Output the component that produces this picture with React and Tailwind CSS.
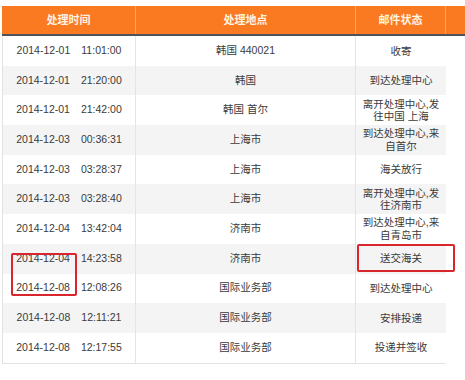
import React from "react";

const rows = [
  ["2014-12-01", "11:01:00", "韩国 440021", ["收寄"]],
  ["2014-12-01", "21:20:00", "韩国", ["到达处理中心"]],
  ["2014-12-01", "21:42:00", "韩国 首尔", ["离开处理中心,发", "往中国 上海"]],
  ["2014-12-03", "00:36:31", "上海市", ["到达处理中心,来", "自首尔"]],
  ["2014-12-03", "03:28:37", "上海市", ["海关放行"]],
  ["2014-12-03", "03:28:40", "上海市", ["离开处理中心,发", "往济南市"]],
  ["2014-12-04", "13:42:04", "济南市", ["到达处理中心,来", "自青岛市"]],
  ["2014-12-04", "14:23:58", "济南市", ["送交海关"]],
  ["2014-12-08", "12:08:26", "国际业务部", ["到达处理中心"]],
  ["2014-12-08", "12:11:21", "国际业务部", ["安排投递"]],
  ["2014-12-08", "12:17:55", "国际业务部", ["投递并签收"]],
];

const font = "font-['Liberation_Sans','Noto_Sans_CJK_SC',sans-serif]";

export default function App() {
  return (
    <div className={`relative w-[465px] h-[380px] bg-white overflow-hidden ${font} text-[10.5px] text-[#3a3a3a]`}>
      <div className="pt-[6px] pl-[2px]">
        {/* header */}
        <div className="grid grid-cols-[134px_220px_90px_1fr] h-[30px] bg-[#fa7a22] border-b-2 border-[#4b5360] text-[#fff4e0] font-bold text-[11px]">
          <div className="flex items-center justify-center border-r border-[#fca463]">处理时间</div>
          <div className="flex items-center justify-center border-r border-[#fca463]">处理地点</div>
          <div className="flex items-center justify-center border-r border-[#fca463]">邮件状态</div>
          <div />
        </div>

        {/* body */}
        <div className="w-[444px] border-l border-b border-[#e2e2e2]">
          {rows.map(([date, time, place, status], i) => (
            <div
              key={i}
              className={`grid grid-cols-[133px_220px_90px] h-[29.7px] ${i % 2 === 1 ? "bg-[#f4f4f4]" : "bg-white"}`}
            >
              <div className="flex items-center justify-center gap-[11px] border-r border-[#e4e4e4]">
                <span>{date}</span>
                <span>{time}</span>
              </div>
              <div className="flex items-center justify-center border-r border-[#e4e4e4]">{place}</div>
              <div className="flex flex-col items-center justify-center leading-[12.5px] text-center">
                {status.map((s) => (
                  <span key={s}>{s}</span>
                ))}
              </div>
            </div>
          ))}
        </div>
      </div>

      {/* red highlight boxes */}
      <div className="absolute left-[11px] top-[253px] w-[66px] h-[43px] border-2 border-[#d9262c] rounded-[2px]" />
      <div className="absolute left-[357px] top-[244px] w-[98px] h-[28px] border-2 border-[#d9262c] rounded-[2px]" />
    </div>
  );
}
